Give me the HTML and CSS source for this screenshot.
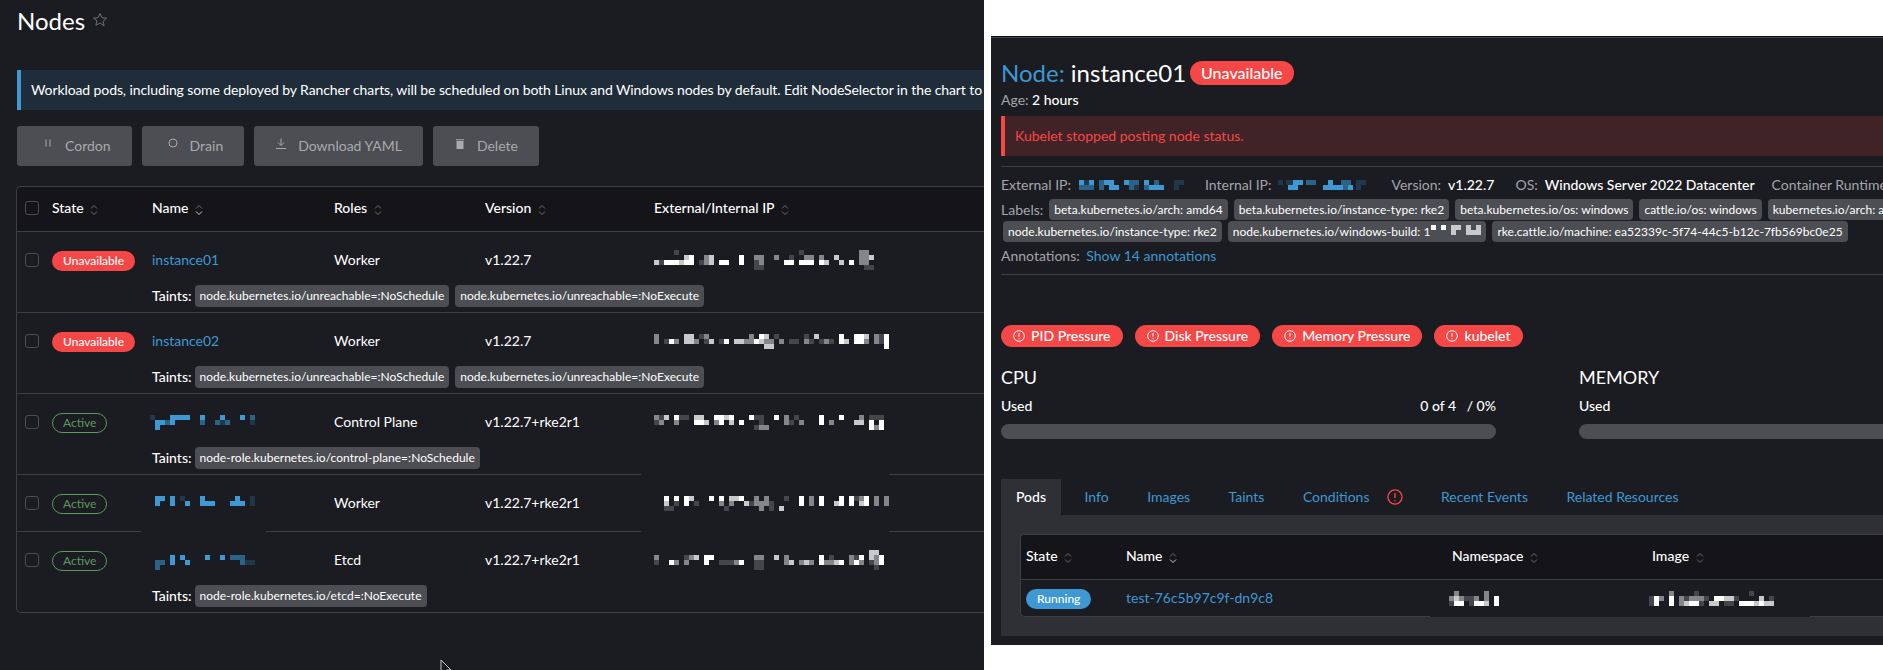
FILE: index.html
```html
<!DOCTYPE html>
<html lang="en">

<head>
    <meta charset="UTF-8">
    <meta name="viewport" content="width=device-width, initial-scale=1.0">
    <title>Nodes</title>
    <link rel="stylesheet" href="styles.css">
</head>

<body>
    <svg class="defs" width="0" height="0">
        <symbol id="sort" viewBox="0 0 8 12"><path d="M1 4.500 4 1.500l3 3M1 7.500l3 3 3-3" /></symbol>
        <symbol id="sort-down" viewBox="0 0 8 12"><path d="M1 4.500 4 1.500l3 3" /><path class="on" d="M1 7.500l3 3 3-3" /></symbol>
        <symbol id="alert" viewBox="0 0 12 12"><circle cx="6" cy="6" r="5.300" /><path d="M6 3v3.800M6 8.200v1" /></symbol>
    </svg>

    <section class="nodes">
        <h1 class="page-title">Nodes
            <svg class="star" viewBox="0 0 16 16"><path d="M8 1.500l1.900 4.200 4.600.5-3.400 3.100 1 4.500L8 11l-4.100 2.300 1-4.500L1.500 6.200l4.600-.5z" /></svg>
        </h1>
        <div class="banner">Workload pods, including some deployed by Rancher charts, will be scheduled on both Linux and Windows nodes by default. Edit NodeSelector in the chart to</div>

        <div class="actions">
            <button class="btn btn-wide">
                <svg viewBox="0 0 12 12"><path d="M4 1.500v7M8 1.500v7" /></svg>Cordon
            </button>
            <button class="btn btn-wide">
                <svg viewBox="0 0 12 12"><circle cx="6" cy="5" r="4" /></svg>Drain
            </button>
            <button class="btn">
                <svg viewBox="0 0 12 12"><path d="M6 .5v6.500M3 4.500 6 7.500l3-3M1 10.500h10" /></svg>Download YAML
            </button>
            <button class="btn">
                <svg viewBox="0 0 12 12"><path class="solid" d="M2.500 3h7v8h-7zM2 1.300h8v1H2z" /></svg>Delete
            </button>
        </div>

        <div class="table">
            <div class="cols head">
                <span class="check"></span>
                <span>State <svg class="sort"><use href="#sort" /></svg></span>
                <span>Name <svg class="sort"><use href="#sort-down" /></svg></span>
                <span>Roles <svg class="sort"><use href="#sort" /></svg></span>
                <span>Version <svg class="sort"><use href="#sort" /></svg></span>
                <span>External/Internal IP <svg class="sort"><use href="#sort" /></svg></span>
            </div>

            <div class="row">
                <div class="cols main">
                    <span class="check"></span>
                    <span><span class="badge bad">Unavailable</span></span>
                    <a class="link">instance01</a>
                    <span>Worker</span>
                    <span>v1.22.7</span>
                    <svg class="mosaic ip" viewBox="0 0 235 20">
                        <path class="w" d="M35 7.500h5M85 7.500h5M10 12.500h15M30 12.500h10M65 12.500h10M85 12.500h5M130 12.500h10M145 12.500h15M165 12.500h5M195 12.500h5" />
                        <path class="l" d="M30 7.500h5M55 7.500h5M180 7.500h5M215 7.500h5M0 12.500h5M25 12.500h5M55 12.500h5M170 12.500h5M185 12.500h5" />
                        <path class="m" d="M205 2.500h10M50 7.500h5M100 7.500h10M120 7.500h5M150 7.500h10M165 7.500h5M205 7.500h10M50 12.500h5M105 12.500h5M205 12.500h10" />
                        <path class="d" d="M20 2.500h5M145 2.500h5M135 7.500h5M5 12.500h5M45 12.500h5M100 12.500h5M100 17.500h10M210 17.500h10" />
                    </svg>
                </div>
                <div class="taints">Taints: <span class="tag">node.kubernetes.io/unreachable=:NoSchedule</span><span class="tag">node.kubernetes.io/unreachable=:NoExecute</span></div>
            </div>

            <div class="row">
                <div class="cols main">
                    <span class="check"></span>
                    <span><span class="badge bad">Unavailable</span></span>
                    <a class="link">instance02</a>
                    <span>Worker</span>
                    <span>v1.22.7</span>
                    <svg class="mosaic ip" viewBox="0 0 235 15">
                        <path class="w" d="M105 2.500h5M185 2.500h5M200 2.500h10M230 2.500h5M15 7.500h5M70 7.500h5M100 7.500h5M185 7.500h5M200 7.500h10M230 7.500h5M230 12.500h5" />
                        <path class="l" d="M30 2.500h10M110 2.500h5M160 2.500h5M210 2.500h5M30 7.500h10M55 7.500h5M80 7.500h10M105 7.500h5M190 7.500h5M110 12.500h10" />
                        <path class="m" d="M0 2.500h5M50 2.500h5M95 2.500h5M220 2.500h5M0 7.500h5M20 7.500h5M40 7.500h5M90 7.500h10M110 7.500h10M125 7.500h5M150 7.500h5M170 7.500h5M210 7.500h5M220 7.500h5" />
                        <path class="d" d="M45 2.500h5M120 2.500h5M150 2.500h5M225 2.500h5M10 7.500h5M50 7.500h5M65 7.500h5M135 7.500h10M155 7.500h5M165 7.500h5M175 7.500h5M225 7.500h5" />
                    </svg>
                </div>
                <div class="taints">Taints: <span class="tag">node.kubernetes.io/unreachable=:NoSchedule</span><span class="tag">node.kubernetes.io/unreachable=:NoExecute</span></div>
            </div>

            <div class="row">
                <div class="cols main">
                    <span class="check"></span>
                    <span><span class="badge good">Active</span></span>
                    <svg class="mosaic name" viewBox="0 0 110 15">
                        <path class="b1" d="M20 2.500h20M50 2.500h5M70 2.500h5M90 2.500h5M5 7.500h10M20 7.500h5M5 12.500h5" />
                        <path class="b2" d="M100 2.500h5M15 7.500h5M50 7.500h5M65 7.500h5M75 7.500h5" />
                        <path class="b3" d="M0 2.500h5M70 7.500h5M100 7.500h5" />
                    </svg>
                    <span>Control Plane</span>
                    <span>v1.22.7+rke2r1</span>
                    <svg class="mosaic ip" viewBox="0 0 235 15">
                        <path class="w" d="M20 2.500h5M60 2.500h10M75 2.500h5M95 2.500h5M65 7.500h5M85 7.500h5M120 2.500h5M165 2.500h5M185 2.500h5M40 7.500h10M215 7.500h5M225 7.500h5M165 7.500h5M215 12.500h5M225 12.500h5" />
                        <path class="l" d="M10 2.500h5M40 2.500h10M50 7.500h5M75 7.500h5M70 2.500h5M200 7.500h10" />
                        <path class="m" d="M0 2.500h5M30 2.500h5M130 2.500h5M205 2.500h5M5 7.500h5M20 7.500h5M60 7.500h5M130 7.500h5M145 7.500h5M175 7.500h5M105 12.500h10M220 12.500h5" />
                        <path class="d" d="M5 2.500h5M25 2.500h10M100 2.500h10M140 2.500h5M215 2.500h15M105 7.500h5M135 7.500h5M0 7.500h5M100 12.500h5" />
                    </svg>
                </div>
                <div class="taints">Taints: <span class="tag">node-role.kubernetes.io/control-plane=:NoSchedule</span></div>
            </div>

            <div class="row solo">
                <div class="cols main">
                    <span class="check"></span>
                    <span><span class="badge good">Active</span></span>
                    <svg class="mosaic name" viewBox="0 0 110 15">
                        <path class="b1" d="M5 2.500h10M20 2.500h5M50 2.500h5M85 2.500h5M5 7.500h5M20 7.500h5M35 7.500h5M50 7.500h15M80 7.500h15" />
                        <path class="b3" d="M30 2.500h5M100 2.500h5M100 7.500h5" />
                    </svg>
                    <span>Worker</span>
                    <span>v1.22.7+rke2r1</span>
                    <svg class="mosaic ip" viewBox="0 0 235 15">
                        <path class="w" d="M10 2.500h5M20 2.500h5M30 2.500h5M55 2.500h5M65 2.500h5M85 2.500h5M145 2.500h5M165 2.500h5M185 2.500h5M195 2.500h5M210 2.500h5M30 7.500h5M145 7.500h5M165 7.500h5M185 7.500h5M195 7.500h5M210 7.500h5" />
                        <path class="l" d="M35 2.500h5M75 2.500h10M10 7.500h5M90 7.500h5M180 7.500h5M205 7.500h5M125 12.500h5" />
                        <path class="m" d="M100 2.500h5M110 2.500h5M155 2.500h5M205 2.500h5M220 2.500h5M230 2.500h5M65 7.500h5M75 7.500h5M100 7.500h15M155 7.500h5M220 7.500h5M230 7.500h5M105 12.500h5" />
                        <path class="d" d="M130 2.500h5M200 2.500h5M20 7.500h5M40 7.500h5M95 7.500h5M115 7.500h5M10 12.500h10M70 12.500h5M115 12.500h5" />
                    </svg>
                </div>
            </div>

            <div class="row">
                <div class="cols main">
                    <span class="check"></span>
                    <span><span class="badge good">Active</span></span>
                    <svg class="mosaic name" viewBox="0 0 110 20">
                        <path class="b1" d="M20 7.500h5M30 7.500h5M55 7.500h5M70 7.500h5M20 12.500h5M35 12.500h5" />
                        <path class="b2" d="M80 7.500h15M5 12.500h10M90 12.500h5M5 17.500h5" />
                        <path class="b3" d="M95 12.500h10" />
                    </svg>
                    <span>Etcd</span>
                    <span>v1.22.7+rke2r1</span>
                    <svg class="mosaic ip" viewBox="0 0 235 20">
                        <path class="w" d="M50 7.500h10M165 7.500h5M205 7.500h5M225 7.500h5M15 12.500h5M50 12.500h5M85 12.500h5M165 12.500h5M185 12.500h5M200 12.500h5M225 12.500h5" />
                        <path class="l" d="M215 2.500h10M40 7.500h5M120 7.500h5M215 7.500h5M135 12.500h5M150 12.500h5M180 12.500h5" />
                        <path class="m" d="M0 7.500h5M35 7.500h5M100 7.500h10M130 7.500h5M195 7.500h5M220 7.500h5M20 12.500h5M30 12.500h5M80 12.500h5M130 12.500h5M145 12.500h5M155 12.500h5M170 12.500h10M195 12.500h5M205 12.500h5M220 12.500h5" />
                        <path class="d" d="M30 7.500h5M175 7.500h5M200 7.500h5M0 12.500h5M65 12.500h15M100 12.500h10M215 12.500h5M100 17.500h10M220 17.500h5" />
                    </svg>
                </div>
                <div class="taints">Taints: <span class="tag">node-role.kubernetes.io/etcd=:NoExecute</span></div>
            </div>
        </div>

        <div class="patch patch-ip1"></div>
        <div class="patch patch-ip2"></div>
        <div class="patch patch-name"></div>

        <svg class="cursor" viewBox="0 0 12 18"><path d="M1 1v14l3.500-3.200 2.500 5 2-1-2.400-4.800H11z" /></svg>
    </section>

    <section class="detail">
        <div class="detail-title">
            <h2><span class="primary">Node:</span> instance01</h2>
            <span class="badge bad big">Unavailable</span>
        </div>
        <div class="age"><span class="muted">Age:</span> 2 hours</div>
        <div class="error">Kubelet stopped posting node status.</div>
        <hr class="rule">

        <div class="meta">
            <span class="muted">External IP:</span>
            <svg class="mosaic ext" viewBox="0 0 110 10">
                <path class="b1" d="M0 2.500h5M10 2.500h5M25 2.500h10M45 2.500h5M65 2.500h5M70 7.500h15M30 7.500h10" />
                <path class="b2" d="M20 2.500h5M50 2.500h10M75 2.500h5M0 7.500h15M20 7.500h5M50 7.500h5M65 7.500h5" />
                <path class="b3" d="M5 2.500h5M95 2.500h10M55 7.500h5M95 7.500h5" />
            </svg>
            <span class="muted gap-ip">Internal IP:</span>
            <svg class="mosaic int" viewBox="0 0 90 10">
                <path class="b1" d="M15 2.500h10M50 2.500h5M10 7.500h10M45 7.500h20M70 7.500h5" />
                <path class="b2" d="M28 2.500h10M63 2.500h10M65 7.500h5" />
                <path class="b3" d="M0 2.500h5M8 2.500h7M78 2.500h10M78 7.500h5" />
            </svg>
            <span class="muted gap-version">Version:</span>
            <span class="gap-value">v1.22.7</span>
            <span class="muted gap-os">OS:</span>
            <span class="gap-value">Windows Server 2022 Datacenter</span>
            <span class="muted gap-runtime">Container Runtime</span>
        </div>

        <div class="labels">
            <span class="muted">Labels:</span>
            <span class="tag">beta.kubernetes.io/arch: amd64</span>
            <span class="tag">beta.kubernetes.io/instance-type: rke2</span>
            <span class="tag">beta.kubernetes.io/os: windows</span>
            <span class="tag">cattle.io/os: windows</span>
            <span class="tag">kubernetes.io/arch: amd64</span>
        </div>
        <div class="labels second">
            <span class="tag">node.kubernetes.io/instance-type: rke2</span>
            <span class="tag">node.kubernetes.io/windows-build: 1<svg class="mosaic build" viewBox="0 0 50 10">
                <path class="w" d="M0 2.500h5M10 2.500h5" /><path class="l" d="M20 2.500h10M35 2.500h5M45 2.500h5M20 7.500h5M35 7.500h15" />
            </svg></span>
            <span class="tag">rke.cattle.io/machine: ea52339c-5f74-44c5-b12c-7fb569bc0e25</span>
        </div>
        <div class="annotations"><span class="muted">Annotations:</span> <a class="link">Show 14 annotations</a></div>
        <hr class="rule rule-low">

        <div class="pills">
            <span class="pill"><svg class="alert"><use href="#alert" /></svg>PID Pressure</span>
            <span class="pill"><svg class="alert"><use href="#alert" /></svg>Disk Pressure</span>
            <span class="pill"><svg class="alert"><use href="#alert" /></svg>Memory Pressure</span>
            <span class="pill"><svg class="alert"><use href="#alert" /></svg>kubelet</span>
        </div>

        <div class="gauges">
            <div class="gauge">
                <h3>CPU</h3>
                <div class="gauge-line"><span>Used</span><span>0 of 4 &nbsp; / 0%</span></div>
                <div class="bar"></div>
            </div>
            <div class="gauge">
                <h3>MEMORY</h3>
                <div class="gauge-line"><span>Used</span></div>
                <div class="bar"></div>
            </div>
        </div>

        <div class="tabs">
            <span class="tab active">Pods</span>
            <a class="tab">Info</a>
            <a class="tab">Images</a>
            <a class="tab">Taints</a>
            <a class="tab">Conditions<svg class="tab-alert"><use href="#alert" /></svg></a>
            <a class="tab">Recent Events</a>
            <a class="tab">Related Resources</a>
        </div>

        <div class="tab-body">
            <div class="table pods">
                <div class="pod-cols head">
                    <span>State <svg class="sort"><use href="#sort" /></svg></span>
                    <span>Name <svg class="sort"><use href="#sort-down" /></svg></span>
                    <span>Namespace <svg class="sort"><use href="#sort" /></svg></span>
                    <span>Image <svg class="sort"><use href="#sort" /></svg></span>
                </div>
                <div class="pod-cols pod-row">
                    <span><span class="badge run">Running</span></span>
                    <a class="link">test-76c5b97c9f-dn9c8</a>
                    <svg class="mosaic ns" viewBox="0 0 50 15">
                        <path class="w" d="M5 12.500h10M25 12.500h10M45 12.500h5M45 7.500h5" />
                        <path class="l" d="M5 7.500h5M35 12.500h5" />
                        <path class="m" d="M5 2.500h5M35 2.500h5M0 7.500h5M10 7.500h5M25 7.500h5M35 7.500h5" />
                        <path class="d" d="M15 7.500h10M20 12.500h5M0 12.500h5" />
                    </svg>
                    <svg class="mosaic img" viewBox="0 0 130 15">
                        <path class="w" d="M5 7.500h5M20 7.500h5M20 12.500h5M40 12.500h10M65 7.500h10M5 12.500h5M90 12.500h15M110 12.500h5" />
                        <path class="l" d="M35 12.500h5M60 12.500h10M75 7.500h10M105 12.500h5M115 12.500h10M110 7.500h5" />
                        <path class="m" d="M20 2.500h5M10 7.500h5M30 7.500h5M40 7.500h10M50 7.500h5M30 12.500h5" />
                        <path class="d" d="M45 2.500h5M100 2.500h5M0 7.500h5M35 7.500h5M55 7.500h5M85 7.500h5M120 7.500h5M0 12.500h5M50 12.500h5M75 12.500h10" />
                    </svg>
                </div>
            </div>
            <div class="patch patch-pods"></div>
        </div>
    </section>
</body>

</html>
```
FILE: styles.css
```css
* {
    box-sizing: border-box;
}

body {
    margin: 0;
    height: 670px;
    width: 1883px;
    display: flex;
    overflow: hidden;
    background: #fff;
    color: #fff;
    font-family: Lato, "Open Sans", sans-serif;
    font-size: 14px;
    line-height: 20px;
}

.defs {
    position: absolute;
}

/* left window */
.nodes {
    position: relative;
    width: 984px;
    height: 670px;
    flex-shrink: 0;
    padding-left: 17px;
    overflow: hidden;
    background: #1b1c21;
}

.page-title {
    margin: 6px 0 0;
    height: 30px;
    display: flex;
    align-items: center;
    gap: 7px;
    font-size: 24px;
    font-weight: 400;
    line-height: 30px;
}

.star {
    width: 16px;
    height: 16px;
    margin-top: -3px;
    fill: none;
    stroke: #6f7075;
    stroke-width: 1;
}

.banner {
    height: 40px;
    margin-top: 34px;
    padding-left: 10px;
    display: flex;
    align-items: center;
    white-space: nowrap;
    letter-spacing: -0.1px;
    background: #1f2d3a;
    border-left: 4px solid #3d98d3;
}

.actions {
    display: flex;
    gap: 10px;
    margin-top: 16px;
}

.btn {
    height: 40px;
    padding: 0 21px;
    display: flex;
    align-items: center;
    gap: 11px;
    border: none;
    border-radius: 3px;
    background: #4d4e53;
    color: #a9aaad;
    font: inherit;
}

.btn-wide {
    padding-left: 25px;
}

.btn svg {
    width: 12px;
    height: 12px;
    margin-top: -4px;
    fill: none;
    stroke: #a9aaad;
    stroke-width: 1;
}

.btn svg .solid {
    fill: #a9aaad;
    stroke: none;
}

/* tables */
.table {
    width: 1100px;
    margin-top: 20px;
    margin-left: -1px;
    border: 1px solid #3e3f44;
    border-right: none;
    border-radius: 5px 0 0 5px;
    overflow: hidden;
}

.cols {
    display: grid;
    grid-template-columns: 35px 100px 182px 151px 169px 1fr;
    align-items: center;
}

.head {
    height: 45px;
    padding-bottom: 3px;
    background: #141419;
    border-bottom: 1px solid #3e3f44;
    font-weight: 500;
}

.sort {
    width: 8px;
    height: 12px;
    margin-left: 3px;
    vertical-align: -3px;
    fill: none;
    stroke: #6a6b70;
    stroke-width: 1;
}

#sort-down .on {
    stroke: #d0d0d3;
}

.check {
    width: 14px;
    height: 14px;
    margin-left: 8px;
    border: 1px solid #4d4e53;
    border-radius: 3px;
}

.row {
    height: 81px;
    border-bottom: 1px solid #3e3f44;
}

.row.solo {
    height: 57px;
}

.row:last-child {
    border-bottom: none;
    height: 80px;
}

.main {
    height: 52px;
    padding-top: 4px;
}

.row.solo .main {
    height: 56px;
    padding-top: 0;
}

.taints {
    height: 28px;
    padding-left: 135px;
    padding-bottom: 4px;
    display: flex;
    align-items: center;
    font-weight: 500;
}

.tag {
    height: 22px;
    display: inline-flex;
    align-items: center;
    flex-shrink: 0;
    padding: 0 5px;
    margin-left: 6px;
    border-radius: 4px;
    background: #4d4e53;
    color: #fff;
    font-size: 12px;
    font-weight: 400;
    letter-spacing: 0.03px;
    white-space: nowrap;
}

.taints .tag:first-of-type {
    margin-left: 3px;
}

.link {
    color: #3d98d3;
}

.badge {
    display: inline-block;
    height: 20px;
    padding: 0 11px;
    border-radius: 10px;
    font-size: 12px;
    line-height: 20px;
    vertical-align: middle;
}

.badge.bad {
    background: #f64747;
    font-weight: 500;
}

.badge.good {
    padding: 0 10px;
    border: 1px solid #5d995d;
    color: #5d995d;
    line-height: 18px;
}

.badge.run {
    padding: 0 11px;
    background: #3d98d3;
    font-weight: 500;
}

.badge.big {
    height: 24px;
    padding: 0 11px;
    border-radius: 12px;
    font-size: 16px;
    line-height: 24px;
}

/* blurred out values */
.mosaic {
    display: block;
    flex-shrink: 0;
    shape-rendering: crispEdges;
    fill: none;
    stroke-width: 5;
}

.mosaic .w { stroke: #fff; }
.mosaic .l { stroke: #c9c9cb; }
.mosaic .m { stroke: #85868a; }
.mosaic .d { stroke: #45464b; }
.mosaic .b1 { stroke: #3d98d3; }
.mosaic .b2 { stroke: #2a6288; }
.mosaic .b3 { stroke: #21384b; }

.mosaic.ip {
    width: 235px;
}

.mosaic.name {
    width: 110px;
    margin-left: -2px;
}

.patch {
    position: absolute;
    height: 3px;
    background: #1b1c21;
}

.patch-ip1 {
    left: 641px;
    top: 473px;
    width: 248px;
}

.patch-ip2 {
    left: 641px;
    top: 530px;
    width: 248px;
}

.patch-name {
    left: 141px;
    top: 530px;
    width: 125px;
}

.cursor {
    position: absolute;
    left: 440px;
    top: 659px;
    width: 12px;
    height: 18px;
    fill: #1b1c21;
    stroke: #c9c9cb;
    stroke-width: 1;
}

/* right window */
.detail {
    position: relative;
    width: 892px;
    height: 609px;
    margin: 36px 0 0 7px;
    flex-shrink: 0;
    padding-left: 10px;
    overflow: hidden;
    background: #1b1c21;
    border-top: 1px solid #0c0c0e;
    box-shadow: inset 0 1px #46474c;
}

.detail-title {
    margin-top: 24px;
    height: 24px;
    display: flex;
    align-items: center;
    gap: 4px;
}

.detail-title h2 {
    margin: 0;
    font-size: 24px;
    font-weight: 400;
}

.primary {
    color: #3d98d3;
}

.muted {
    color: #a4a5ab;
}

.age {
    margin-top: 5px;
    font-weight: 500;
}

.age .muted {
    font-weight: 400;
}

.error {
    height: 40px;
    margin-top: 6px;
    padding-left: 10px;
    display: flex;
    align-items: center;
    background: #402326;
    border-left: 4px solid #f64747;
    color: #f64747;
}

.rule {
    margin: 10px 0 0;
    height: 1px;
    border: none;
    background: #3e3f44;
}

.rule-low {
    margin-top: 8px;
}

.meta {
    margin-top: 8px;
    display: flex;
    align-items: center;
    white-space: nowrap;
}

.mosaic.ext {
    width: 110px;
    margin-left: 8px;
}

.mosaic.int {
    width: 90px;
    margin-left: 6px;
}

.gap-ip {
    margin-left: 16px;
}

.gap-version {
    margin-left: 24px;
}

.gap-value {
    margin-left: 7px;
    font-weight: 500;
}

.gap-os {
    margin-left: 21px;
}

.gap-runtime {
    margin-left: 17px;
}

.labels {
    margin-top: 4px;
    height: 21px;
    display: flex;
    align-items: center;
    white-space: nowrap;
}

.labels.second {
    margin-top: 1px;
    margin-left: -4px;
}

.labels .tag {
    height: 21px;
    margin-left: 6px;
}

.mosaic.build {
    width: 50px;
    margin-left: 1px;
    margin-top: -4px;
}

.annotations {
    margin-top: 4px;
}

.annotations .link {
    margin-left: 3px;
}

.pills {
    margin-top: 50px;
    display: flex;
    gap: 12px;
}

.pill {
    height: 22px;
    padding: 0 12px;
    display: flex;
    align-items: center;
    gap: 6px;
    border-radius: 11px;
    background: #f64747;
    font-weight: 500;
}

.alert {
    width: 12px;
    height: 12px;
    fill: none;
    stroke: #fff;
    stroke-width: 1;
}

.gauges {
    margin-top: 18px;
    display: flex;
    gap: 83px;
}

.gauge {
    width: 495px;
    flex-shrink: 0;
}

.gauge h3 {
    margin: 0;
    font-size: 18px;
    font-weight: 400;
    line-height: 24px;
}

.gauge-line {
    margin-top: 7px;
    display: flex;
    justify-content: space-between;
    font-weight: 500;
}

.bar {
    height: 15px;
    margin-top: 8px;
    border-radius: 8px;
    background: #4d4e53;
}

.tabs {
    margin-top: 40px;
    height: 36px;
    display: flex;
    gap: 8.5px;
    white-space: nowrap;
}

.tab {
    padding: 0 15px;
    display: flex;
    align-items: center;
    color: #3d98d3;
}

.tab.active {
    background: #2f3035;
    color: #fff;
    font-weight: 500;
}

.tab-alert {
    width: 16px;
    height: 16px;
    margin-left: 17px;
    fill: none;
    stroke: #f64747;
    stroke-width: 1;
}

.tab-body {
    position: relative;
    height: 121px;
    padding: 19px 0 0 19px;
    background: #2f3035;
}

.table.pods {
    margin: 0;
    width: 1000px;
    height: 83px;
    background: #1b1c21;
    border-bottom: 1px solid #3e3f44;
}

.pod-cols {
    display: grid;
    grid-template-columns: 100px 326px 200px 1fr;
    align-items: center;
    padding-left: 5px;
}

.pod-row {
    height: 36px;
}

.mosaic.ns {
    width: 50px;
    margin-left: -3px;
}

.mosaic.img {
    width: 130px;
    margin-left: -3px;
}

.patch-pods {
    left: 429px;
    top: 100px;
    width: 380px;
    height: 2px;
    background: #1b1c21;
}
```
